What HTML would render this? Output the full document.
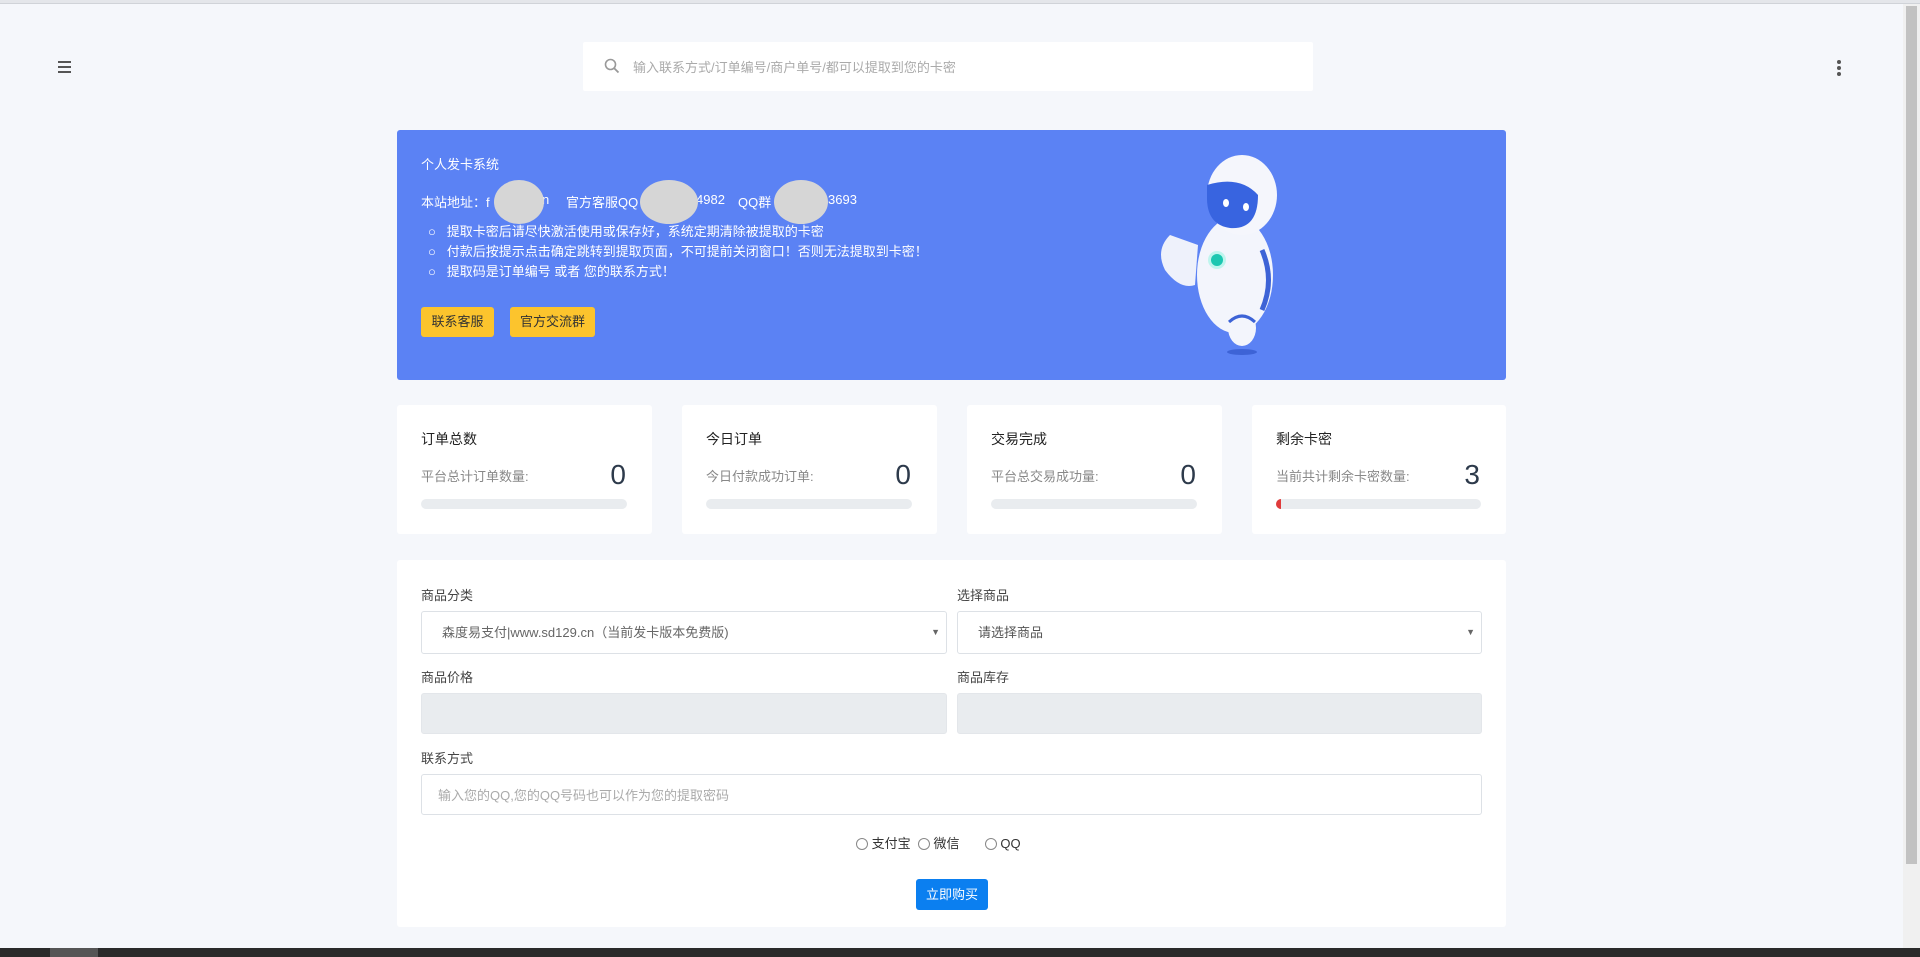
<!DOCTYPE html>
<html><head><meta charset="utf-8"><style>
*{box-sizing:border-box;margin:0;padding:0}
body{width:1920px;height:957px;overflow:hidden;background:#f5f7fb;font-family:"Liberation Sans","Noto Sans CJK SC",sans-serif;font-size:13px;color:#333;position:relative}
.abs{position:absolute}
.card{position:absolute;background:#fff;border-radius:3px}
.stat .t{position:absolute;left:24px;top:24px;font-size:14px;color:#222}
.stat .s{position:absolute;left:24px;top:61px;font-size:13px;color:#888}
.stat .n{position:absolute;right:26px;top:54px;font-size:28px;color:#2d3a4b}
.stat .b{position:absolute;left:24px;right:25px;top:94px;height:10px;border-radius:5px;background:#e9ecef}
.lbl{position:absolute;font-size:13px;color:#444}
.inp{position:absolute;border:1px solid #dde1e6;border-radius:3px;background:#fff;font-size:13px;color:#666;padding-left:20px;line-height:41px}
.gray{background:#e9ecef;border-color:#e3e6ea}
.arrow{position:absolute;right:6px;top:0;font-size:9px;color:#666}
.btn{position:absolute;background:#fcc42d;border-radius:3px;font-size:13px;color:#333;text-align:center;line-height:30px}
.w{position:absolute;top:192px;font-size:13px;color:#fff;white-space:nowrap}
.blob{position:absolute;top:180px;height:44px;border-radius:50%;background:#d6d6d6}
</style></head><body>
<div class="abs" style="left:0;top:0;width:1920px;height:3px;background:#e4e6ea"></div>
<div class="abs" style="left:0;top:3px;width:1920px;height:1px;background:#d0d3d8"></div>
<div class="abs" style="left:58px;top:61px;width:13px;height:2px;background:#555"></div>
<div class="abs" style="left:58px;top:66px;width:13px;height:2px;background:#555"></div>
<div class="abs" style="left:58px;top:71px;width:13px;height:2px;background:#555"></div>
<div class="abs" style="left:1837px;top:60px;width:4px;height:4px;border-radius:2px;background:#555"></div>
<div class="abs" style="left:1837px;top:66px;width:4px;height:4px;border-radius:2px;background:#555"></div>
<div class="abs" style="left:1837px;top:72px;width:4px;height:4px;border-radius:2px;background:#555"></div>
<div class="abs" style="left:583px;top:42px;width:730px;height:49px;background:#fff;border-radius:2px"></div>
<svg class="abs" style="left:604px;top:58px" width="16" height="16" viewBox="0 0 16 16"><circle cx="6.5" cy="6.5" r="5" fill="none" stroke="#999" stroke-width="1.6"/><line x1="10.2" y1="10.2" x2="14.5" y2="14.5" stroke="#999" stroke-width="1.8"/></svg>
<div class="abs" style="left:633px;top:57px;font-size:13px;color:#aaa">输入联系方式/订单编号/商户单号/都可以提取到您的卡密</div>
<div class="abs" style="left:1903px;top:4px;width:17px;height:953px;background:#f0f0f0"></div>
<div class="abs" style="left:1906px;top:6px;width:11px;height:858px;background:#c2c2c2"></div>
<div class="card" style="left:397px;top:130px;width:1109px;height:250px;background:#5b82f4"></div>
<div class="abs" style="left:421px;top:154px;font-size:13px;color:#fff">个人发卡系统</div>
<div class="w" style="left:421px">本站地址：f</div>
<div class="w" style="left:542px">n</div>
<div class="w" style="left:566px">官方客服QQ</div>
<div class="w" style="left:696px">4982</div>
<div class="w" style="left:738px">QQ群</div>
<div class="w" style="left:828px">3693</div>
<div class="blob" style="left:494px;width:50px"></div>
<div class="blob" style="left:640px;width:58px"></div>
<div class="blob" style="left:774px;width:54px"></div>
<div class="abs" style="left:428px;top:222px;font-size:13px;color:#fff;line-height:20px">
<div>○&nbsp;&nbsp; 提取卡密后请尽快激活使用或保存好，系统定期清除被提取的卡密</div>
<div>○&nbsp;&nbsp; 付款后按提示点击确定跳转到提取页面，不可提前关闭窗口！否则无法提取到卡密！</div>
<div>○&nbsp;&nbsp; 提取码是订单编号 或者 您的联系方式！</div></div>
<div class="btn" style="left:421px;top:307px;width:73px">联系客服</div>
<div class="btn" style="left:510px;top:307px;width:85px">官方交流群</div>
<svg class="abs" style="left:1150px;top:150px" width="150" height="210" viewBox="0 0 150 210">
<ellipse cx="92" cy="202" rx="15" ry="3" fill="#3d63d6"/>
<path d="M20 85 Q5 100 15 120 Q30 140 45 135 L48 95 Z" fill="#eef1fb"/>
<ellipse cx="85" cy="125" rx="38" ry="58" fill="#f3f5fc"/>
<path d="M112 100 Q125 130 112 160" stroke="#3d63d6" stroke-width="5" fill="none"/>
<ellipse cx="92" cy="178" rx="14" ry="18" fill="#f3f5fc"/>
<path d="M79 172 Q92 160 105 172" stroke="#3d63d6" stroke-width="3" fill="none"/>
<circle cx="67" cy="110" r="9" fill="#bff5ee"/><circle cx="67" cy="110" r="6" fill="#1cc7b1"/>
<ellipse cx="92" cy="45" rx="35" ry="40" fill="#f5f6fc"/>
<path d="M57 35 Q90 25 108 45 Q108 80 80 78 Q58 75 57 50 Z" fill="#3864e0"/>
<ellipse cx="76" cy="53" rx="3" ry="4" fill="#fff"/><ellipse cx="96" cy="57" rx="3" ry="4" fill="#fff"/>
</svg>
<div class="card stat" style="left:397px;top:405px;width:255px;height:129px"><div class="t">订单总数</div><div class="s">平台总计订单数量:</div><div class="n">0</div><div class="b"></div></div>
<div class="card stat" style="left:682px;top:405px;width:255px;height:129px"><div class="t">今日订单</div><div class="s">今日付款成功订单:</div><div class="n">0</div><div class="b"></div></div>
<div class="card stat" style="left:967px;top:405px;width:255px;height:129px"><div class="t">交易完成</div><div class="s">平台总交易成功量:</div><div class="n">0</div><div class="b"></div></div>
<div class="card stat" style="left:1252px;top:405px;width:254px;height:129px"><div class="t">剩余卡密</div><div class="s">当前共计剩余卡密数量:</div><div class="n">3</div><div class="b"><div style="width:5px;height:10px;border-radius:5px 0 0 5px;background:#e03b3b"></div></div></div>
<div class="card" style="left:397px;top:560px;width:1109px;height:367px"></div>
<div class="lbl" style="left:421px;top:585px">商品分类</div>
<div class="lbl" style="left:957px;top:585px">选择商品</div>
<div class="inp" style="left:421px;top:611px;width:526px;height:43px">森度易支付|www.sd129.cn（当前发卡版本免费版)<span class="arrow">▼</span></div>
<div class="inp" style="left:957px;top:611px;width:525px;height:43px;color:#555">请选择商品<span class="arrow">▼</span></div>
<div class="lbl" style="left:421px;top:667px">商品价格</div>
<div class="lbl" style="left:957px;top:667px">商品库存</div>
<div class="inp gray" style="left:421px;top:693px;width:526px;height:41px"></div>
<div class="inp gray" style="left:957px;top:693px;width:525px;height:41px"></div>
<div class="lbl" style="left:421px;top:748px">联系方式</div>
<div class="inp" style="left:421px;top:774px;width:1061px;height:41px;color:#aaa;padding-left:16px">输入您的QQ,您的QQ号码也可以作为您的提取密码</div>
<div class="abs" style="left:856px;top:833px;font-size:13px;color:#333;white-space:pre"><span style="display:inline-block;width:12px;height:12px;border:1px solid #888;border-radius:50%;vertical-align:-2px"></span> 支付宝  <span style="display:inline-block;width:12px;height:12px;border:1px solid #888;border-radius:50%;vertical-align:-2px"></span> 微信       <span style="display:inline-block;width:12px;height:12px;border:1px solid #888;border-radius:50%;vertical-align:-2px"></span> QQ</div>
<div class="abs" style="left:916px;top:879px;width:72px;height:31px;background:#0b7ff0;border-radius:3px;color:#fff;font-size:13px;text-align:center;line-height:31px">立即购买</div>
<div class="abs" style="left:0;top:948px;width:1920px;height:9px;background:#2a2a2a"></div>
<div class="abs" style="left:50px;top:948px;width:48px;height:9px;background:#555"></div>
</body></html>
